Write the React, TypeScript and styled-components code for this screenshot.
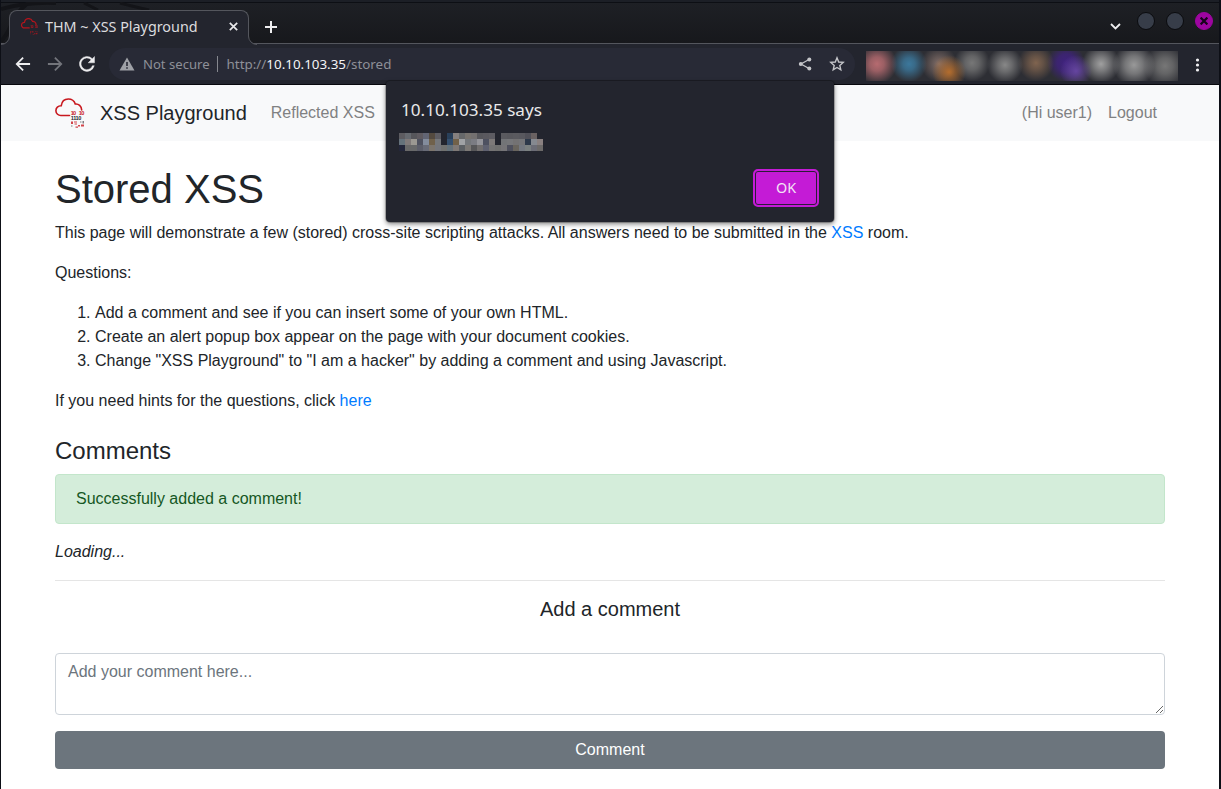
import React from "react";
import styled, { createGlobalStyle, css } from "styled-components";

const chrome = "#23252e";
const tabLine = "#54565d";

const GlobalStyle = createGlobalStyle`
  *, *::before, *::after { box-sizing: border-box; }
  body { margin: 0; background: #0b0d13; overflow: hidden; }
`;

const Window = styled.div`
  position: relative;
  width: 1221px;
  height: 789px;
  overflow: hidden;
  display: flex;
  flex-direction: column;
  padding: 0 2px 0 1px;
  background: #0d0f16;
  font-family: "Noto Sans", sans-serif;
`;

const TabStrip = styled.header`
  position: relative;
  height: 44px;
  flex: none;
  display: flex;
  align-items: flex-start;
  border-top: 2px solid #1c1f26;
  border-bottom: 1px solid ${tabLine};
  background: linear-gradient(#0d0f14 0, #0d0f14 1px, #1e2025 1px, #17181c 100%);
`;

const StripArt = styled.svg`
  position: absolute;
  left: 0;
  top: 0;
`;

const Tab = styled.div`
  position: relative;
  display: flex;
  align-items: center;
  width: 240px;
  height: 34px;
  margin: 8px 0 0 8px;
  padding: 0 10px 2px 11px;
  border: 1px solid ${tabLine};
  border-bottom: 0;
  border-radius: 8px 8px 0 0;
  background: ${chrome};
  color: #dcdcdf;
`;

const TabFoot = styled.svg<{ $side: "left" | "right" }>`
  position: absolute;
  bottom: -1px;
  ${(p) => (p.$side === "left" ? css`left: -9px;` : css`right: -9px; transform: scaleX(-1);`)}
`;

const TabTitle = styled.span`
  flex: 1;
  margin-left: 7px;
  font-size: 14.35px;
  line-height: 20px;
  white-space: nowrap;
`;

const NewTab = styled.div`
  display: flex;
  margin: 19px 0 0 16px;
`;

const WindowControls = styled.div`
  display: flex;
  align-items: center;
  gap: 11px;
  margin: 10px 6px 0 auto;
`;

const Chevron = styled.svg`
  margin: 11px 5px 0 0;
`;

const Control = styled.span<{ $close?: boolean }>`
  display: flex;
  align-items: center;
  justify-content: center;
  width: 18px;
  height: 18px;
  border-radius: 50%;
  border: 1px solid ${(p) => (p.$close ? "#9d05a0" : "#0a0b0e")};
  background: ${(p) => (p.$close ? "#9d05a0" : "#373d49")};
`;

const Toolbar = styled.div`
  height: 41px;
  flex: none;
  display: flex;
  align-items: center;
  background: ${chrome};
  border-bottom: 1px solid #08080d;
`;

const NavButtons = styled.div`
  display: flex;
  gap: 12px;
  width: 108px;
  padding-left: 12px;
`;

const AddressBar = styled.div`
  display: flex;
  align-items: center;
  width: 746px;
  height: 32px;
  padding: 0 10px;
  border-radius: 16px;
  background: #282a36;
  color: #8e9098;
`;

const SecurityLabel = styled.span`
  margin-left: 8px;
  padding-right: 7px;
  font-size: 13.1px;
  line-height: 16px;
  border-right: 1px solid #85878e;
  white-space: nowrap;
`;

const Url = styled.span`
  flex: 1;
  margin-left: 9px;
  font-size: 13.4px;
  b { font-weight: 400; color: #f4f4f6; }
`;

const BarIcons = styled.span`
  display: flex;
  align-items: center;
  gap: 16px;
`;

const Extensions = styled.div`
  width: 312px;
  height: 30px;
  margin: 3px 0 0 11px;
  background:
    radial-gradient(circle at 11px 13px, #b66b70 0, #b66b70cc 7px, #b66b7000 20px),
    radial-gradient(circle at 43px 13px, #3c789c 0, #3c789ccc 6px, #3c789c00 18px),
    radial-gradient(circle at 83px 21px, #b46d2d 0, #b46d2d99 7px, #b46d2d00 17px),
    radial-gradient(circle at 73px 13px, #84706a 0, #84706aaa 6px, #84706a00 18px),
    radial-gradient(circle at 106px 12px, #777 0, #777777bb 7px, #77777700 18px),
    radial-gradient(circle at 139px 14px, #888 0, #888888aa 7px, #88888800 18px),
    radial-gradient(circle at 170px 12px, #80644f 0, #80644faa 7px, #80644f00 18px),
    radial-gradient(circle at 210px 20px, #6545a0 0, #6545a099 7px, #6545a000 16px),
    radial-gradient(circle at 200px 12px, #3f227e 0, #3f227ecc 9px, #3f227e00 19px),
    radial-gradient(circle at 235px 13px, #a0a0a0 0, #a0a0a0aa 7px, #a0a0a000 19px),
    radial-gradient(circle at 268px 14px, #999 0, #999999aa 9px, #99999900 21px),
    radial-gradient(circle at 299px 15px, #777 0, #777777bb 8px, #77777700 21px),
    #2d2e34;
`;

const MenuDots = styled.svg`
  margin: 1px 0 0 17px;
`;

const Page = styled.main`
  flex: 1;
  background: #fff;
  color: #212529;
  font-family: "Liberation Sans", Arial, sans-serif;
  font-size: 16px;
  line-height: 24px;
`;

const Navbar = styled.nav`
  height: 56px;
  background: #f8f9fa;
`;

const Container = styled.div`
  width: 1110px;
  margin: 0 auto;
`;

const NavRow = styled(Container)`
  height: 56px;
  display: flex;
  align-items: center;
`;

const Brand = styled.span`
  display: flex;
  align-items: center;
  gap: 15px;
  margin-right: 24px;
  font-size: 20px;
  line-height: 30px;
  white-space: nowrap;
`;

const NavItem = styled.span<{ $push?: boolean }>`
  color: #808182;
  white-space: nowrap;
  margin-right: ${(p) => (p.$push ? "auto" : "0")};
`;

const UserItems = styled.div`
  display: flex;
  gap: 16px;
  padding-right: 8px;
`;

const Title = styled.h1`
  margin: 0 0 8px;
  padding-top: 24px;
  font-size: 40px;
  font-weight: 400;
  line-height: 48px;
`;

const Text = styled.p`
  margin: 0 0 16px;
`;

const Link = styled.a`
  color: #007bff;
`;

const Questions = styled.ol`
  margin: 0 0 16px;
  padding-left: 40px;
`;

const SectionTitle = styled.h4`
  margin: 24px 0 9px;
  font-size: 24px;
  font-weight: 400;
  line-height: 28px;
`;

const Alert = styled.div`
  height: 50px;
  margin-bottom: 16px;
  padding: 12px 20px;
  border: 1px solid #c3e6cb;
  border-radius: 4px;
  background: #d4edda;
  color: #155724;
`;

const Loading = styled.em`
  display: block;
  margin-bottom: 16px;
`;

const FormTitle = styled.h5`
  margin: 0 0 32px;
  padding-top: 16px;
  border-top: 1px solid #e5e5e5;
  font-size: 20px;
  font-weight: 400;
  line-height: 24px;
  text-align: center;
`;

const CommentBox = styled.textarea`
  display: block;
  width: 100%;
  height: 62px;
  margin: 0 0 16px;
  padding: 6px 12px;
  border: 1px solid #ced4da;
  border-radius: 4px;
  font: inherit;
  resize: vertical;
  &::placeholder { color: #6c757d; }
`;

const Submit = styled.button`
  display: block;
  width: 100%;
  height: 38px;
  padding: 0;
  border: 0;
  border-radius: 4px;
  background: #6c757d;
  color: #fff;
  font: inherit;
`;

const Dialog = styled.section`
  position: absolute;
  left: 386px;
  top: 81px;
  width: 448px;
  height: 141px;
  padding: 17px 15px 15px;
  display: flex;
  flex-direction: column;
  border-radius: 4px;
  background: ${chrome};
  box-shadow: 0 0 0 1px rgba(0, 0, 0, 0.2), 0 2px 5px rgba(0, 0, 0, 0.5);
  color: #e9e9eb;
`;

const DialogTitle = styled.div`
  font-size: 17.1px;
  line-height: 24px;
`;

const Mosaic = styled.svg`
  margin: 11px 0 0 -2px;
`;

const OkButton = styled.button`
  align-self: flex-end;
  margin-top: auto;
  width: 66px;
  height: 38px;
  padding: 0 0 1px;
  border: 2px solid #c41bd6;
  border-radius: 5px;
  box-shadow: inset 0 0 0 1px #2c1c38;
  background: #c41bd6;
  color: #f3e3f5;
  font: 14.4px "Noto Sans", sans-serif;
`;

const mosaicRows: string[][] = [
  "5d5c61 666a70 56565b 5f5b61 626574 544a3f 5d5c62 - 29405a 85807f 66686a 77736f 737070 57575c 5a595f 5d5c62 - 5a5a5f 58585d 5a5a5f 58585e 505058 696161 -".split(" "),
  "65727b 807a7a 9b9892 4f5260 838c9c 70614b 75777b - 35506f 716149 a0a2a5 74777b 7b7c83 94949a 4e5160 7d7978 - 727477 757679 737273 747578 2d394a 858990 898080".split(" "),
  "23263a 696969 68696a 5c5e6a 686b77 7c756d 74767c 70716f 65727a 7f7976 5c6064 7c7976 575759 716e6e 5f6170 747373 70706f 757477 4e505d 69655e 737880 7a8080 6b6c76 6c6a69".split(" "),
];

function CloudLogo({ size, mono }: { size: number; mono?: boolean }) {
  const red = mono ? "#b3141c" : "#c8181e";
  const ink = mono ? "#b3141c" : "#2b2b30";
  return (
    <svg width={size} height={size} viewBox="0 0 30 30" fontFamily="Liberation Sans, sans-serif" fontWeight="700">
      <path
        d="M14.5 17.500H6.200A4.900 4.900 0 0 1 .9 12.700c0-3 2.200-5 5.300-4.900C6.800 3.500 9.600 1 13.300 1c3.500 0 6 2 7 5 3.200-.4 6.200 1.800 6.400 6"
        fill="none"
        stroke={red}
        strokeWidth={mono ? 2.2 : 1.6}
        strokeLinecap="round"
      />
      <g fontSize="5.600">
        <text x="15.700" y="17.400" fill={red} textLength="5.500">10</text>
        <text x="23.800" y="17.400" fill={red} textLength="5.500">10</text>
        {!mono && <text x="15.800" y="22.300" fill={ink} textLength="10.500">1110</text>}
      </g>
      <g fill={red}>
        <path d="M16 23.500h2v2.500h-2zM19 23.500h3v1h-3zM19.500 25.500h2.500v1h-2.500zM23 27h2v1.500h-2zM26 26.500h3v2h-3zM20.500 28.500h2.500v1.200h-2.500z" opacity=".8" />
      </g>
      <path d="M25 23.500h1.500v1H25zM27.500 23h1.500v2.500h-1.500zM16 27.500h1.500v1H16z" fill={ink} opacity=".6" />
    </svg>
  );
}

function Foot({ side }: { side: "left" | "right" }) {
  return (
    <TabFoot $side={side} width="10" height="10" viewBox="0 0 10 10">
      <path d="M0 10V9.500A8.500 8.500 0 0 0 8.500 1V0H10V10Z" fill={chrome} />
      <path d="M0 9.500A8.500 8.500 0 0 0 8.500 1V0" fill="none" stroke={tabLine} />
    </TabFoot>
  );
}

function BrowserTabs() {
  return (
    <TabStrip>
      <StripArt width="240" height="41" viewBox="0 0 240 41" fill="none">
        <path d="M0 7C18 2 35 0 55 1M0 39C12 28 8 16 27 1" stroke="#131418" strokeWidth="4" />
        <path d="M83 1l14 7M119 1c11 3 20 5 29 7" stroke="#131418" strokeWidth="3" />
      </StripArt>
      <Tab>
        <Foot side="left" />
        <Foot side="right" />
        <CloudLogo size={17} mono />
        <TabTitle>THM ~ XSS Playground</TabTitle>
        <svg width="9" height="9" viewBox="0 0 9 9" stroke="#e8e8ea" strokeWidth="1.700">
          <path d="M.8.800l7.400 7.400M8.200.800L.8 8.200" />
        </svg>
      </Tab>
      <NewTab>
        <svg width="12" height="12" viewBox="0 0 12 12" stroke="#eeeef0" strokeWidth="2">
          <path d="M6 0v12M0 6h12" />
        </svg>
      </NewTab>
      <WindowControls>
        <Chevron width="11" height="7" viewBox="0 0 11 7" fill="none" stroke="#eeeef0" strokeWidth="1.800">
          <path d="M1 1l4.500 4.500L10 1" />
        </Chevron>
        <Control />
        <Control />
        <Control $close>
          <svg width="8" height="8" viewBox="0 0 8 8" stroke="#15031a" strokeWidth="2.200">
            <path d="M.6.600l6.800 6.800M7.400.600L.6 7.400" />
          </svg>
        </Control>
      </WindowControls>
    </TabStrip>
  );
}

function BrowserToolbar() {
  return (
    <Toolbar>
      <NavButtons>
        <svg width="20" height="20" viewBox="0 0 24 24" fill="#eeeef0">
          <path d="M20.500 10.900H7.200l5.700-5.700L11.400 3.600 3 12l8.400 8.400 1.500-1.600-5.700-5.700h13.300z" />
        </svg>
        <svg width="20" height="20" viewBox="0 0 24 24" fill="#73757b">
          <path d="M3.500 10.900h13.300l-5.700-5.700 1.500-1.600L21 12l-8.400 8.400-1.500-1.600 5.700-5.700H3.500z" />
        </svg>
        <svg width="20" height="20" viewBox="0 0 24 24" fill="#eeeef0" stroke="#eeeef0" strokeWidth=".5">
          <path d="M18.400 5.600A9 9 0 1 0 20.700 14h-2.200A7 7 0 1 1 17 7l-3.600 3.600H21V3z" />
        </svg>
      </NavButtons>
      <AddressBar>
        <svg width="16" height="14" viewBox="0 0 16 14">
          <path d="M8 .5L15.500 13.500H.5z" fill="#9fa1a7" />
          <path d="M7.200 5h1.600v4H7.200zM7.200 10.300h1.600v1.500H7.200z" fill="#282a36" />
        </svg>
        <SecurityLabel>Not secure</SecurityLabel>
        <Url>http://<b>10.10.103.35</b>/stored</Url>
        <BarIcons>
          <svg width="16" height="16" viewBox="0 0 16 16" fill="#c4c5c9">
            <path d="M12 3.500L4 8l8 4.500" fill="none" stroke="#c4c5c9" strokeWidth="1.300" />
            <circle cx="12.300" cy="3.400" r="2" />
            <circle cx="3.800" cy="8" r="2" />
            <circle cx="12.300" cy="12.600" r="2" />
          </svg>
          <svg width="16" height="16" viewBox="0 0 16 16" fill="none" stroke="#c4c5c9" strokeWidth="1.400">
            <path d="M8 1.800l1.700 4.200 4.500.4-3.400 3 1 4.400L8 11.500l-3.800 2.300 1-4.400-3.400-3 4.500-.4z" />
          </svg>
        </BarIcons>
      </AddressBar>
      <Extensions />
      <MenuDots width="5" height="14" viewBox="0 0 5 14" fill="#f0f0f2">
        <circle cx="2.500" cy="2" r="1.600" />
        <circle cx="2.500" cy="7" r="1.600" />
        <circle cx="2.500" cy="12" r="1.600" />
      </MenuDots>
    </Toolbar>
  );
}

export default function App() {
  return (
    <Window>
      <GlobalStyle />
      <BrowserTabs />
      <BrowserToolbar />
      <Page>
        <Navbar>
          <NavRow>
            <Brand>
              <CloudLogo size={30} />
              XSS Playground
            </Brand>
            <NavItem $push>Reflected XSS</NavItem>
            <UserItems>
              <NavItem>(Hi user1)</NavItem>
              <NavItem>Logout</NavItem>
            </UserItems>
          </NavRow>
        </Navbar>
        <Container>
          <Title>Stored XSS</Title>
          <Text>
            This page will demonstrate a few (stored) cross-site scripting attacks. All answers need to be submitted in
            the <Link>XSS</Link> room.
          </Text>
          <Text>Questions:</Text>
          <Questions>
            <li>Add a comment and see if you can insert some of your own HTML.</li>
            <li>Create an alert popup box appear on the page with your document cookies.</li>
            <li>Change "XSS Playground" to "I am a hacker" by adding a comment and using Javascript.</li>
          </Questions>
          <Text>
            If you need hints for the questions, click <Link>here</Link>
          </Text>
          <SectionTitle>Comments</SectionTitle>
          <Alert>Successfully added a comment!</Alert>
          <Loading>Loading...</Loading>
          <FormTitle>Add a comment</FormTitle>
          <CommentBox placeholder="Add your comment here..." />
          <Submit>Comment</Submit>
        </Container>
      </Page>
      <Dialog>
        <DialogTitle>10.10.103.35 says</DialogTitle>
        <Mosaic width="144" height="18" viewBox="0 0 144 18" shapeRendering="crispEdges">
          {mosaicRows.map((row, y) =>
            row.map((c, x) =>
              c === "-" ? null : <rect key={`${x}-${y}`} x={x * 6} y={y * 6} width="6" height="6" fill={`#${c}`} />
            )
          )}
        </Mosaic>
        <OkButton>OK</OkButton>
      </Dialog>
    </Window>
  );
}
